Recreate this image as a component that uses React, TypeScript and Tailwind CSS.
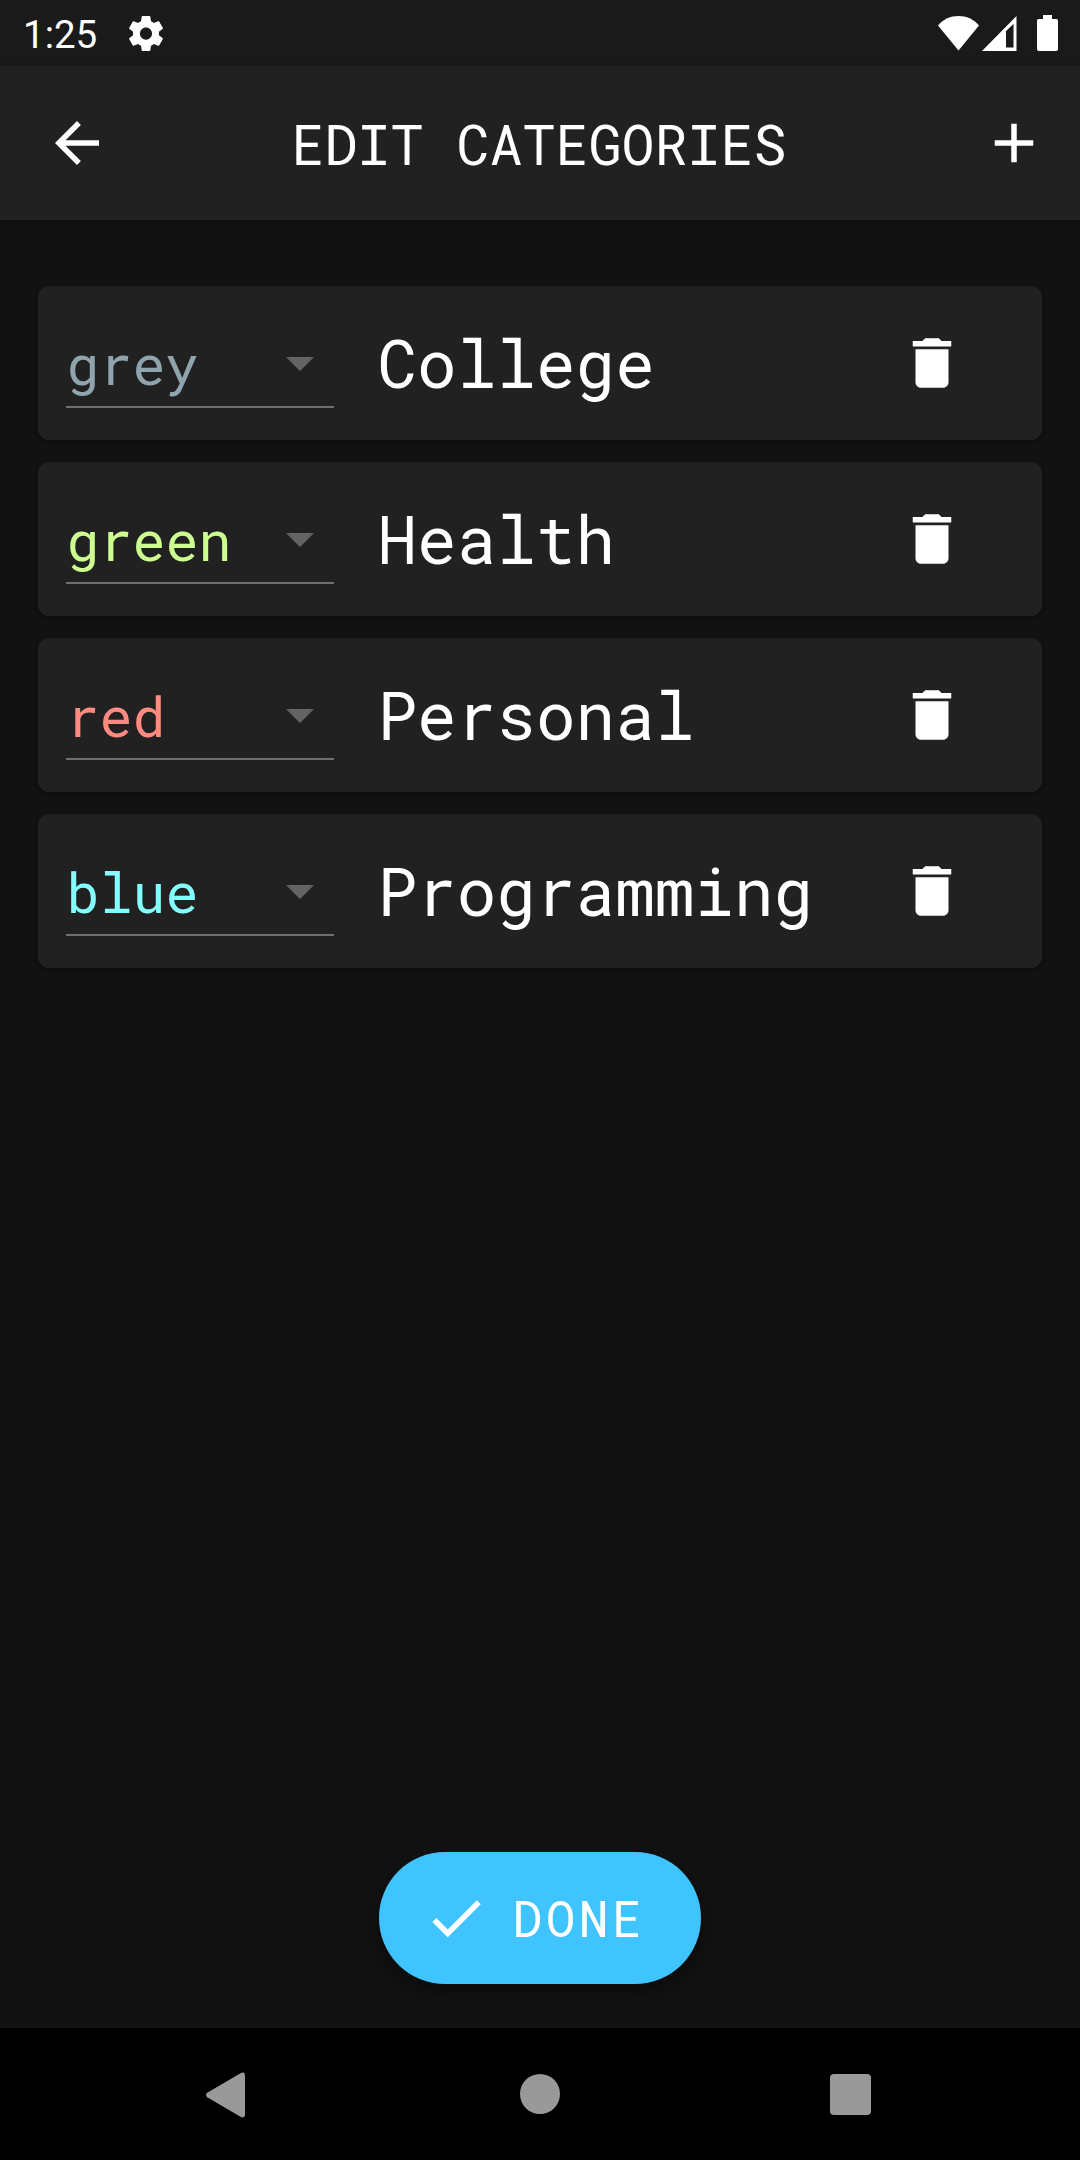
const categories = [
  { color: "grey", tint: "text-[#90a4ae]", name: "College" },
  { color: "green", tint: "text-[#ccff90]", name: "Health" },
  { color: "red", tint: "text-[#ff8a80]", name: "Personal" },
  { color: "blue", tint: "text-[#84ffff]", name: "Programming" },
];

function Icon({ d, className = "" }: { d: string; className?: string }) {
  return (
    <svg viewBox="0 0 24 24" fill="currentColor" className={`size-[66px] shrink-0 ${className}`}>
      <path d={d} />
    </svg>
  );
}

const BACK = "M20 11H7.83l5.59-5.59L12 4l-8 8 8 8 1.41-1.41L7.83 13H20v-2z";
const ADD = "M19 13h-6v6h-2v-6H5v-2h6V5h2v6h6v2z";
const DELETE = "M6 19c0 1.1.9 2 2 2h8c1.1 0 2-.9 2-2V7H6v12zM19 4h-3.5l-1-1h-5l-1 1H5v2h14V4z";
const CHECK = "M9 16.17L4.83 12l-1.42 1.41L9 19 21 7l-1.41-1.41z";
const SETTINGS =
  "M19.43 12.98c.04-.32.07-.64.07-.98s-.03-.66-.07-.98l2.11-1.65c.19-.15.24-.42.12-.64l-2-3.46c-.12-.22-.39-.3-.61-.22l-2.49 1c-.52-.4-1.08-.73-1.69-.98l-.38-2.65C14.46 2.18 14.25 2 14 2h-4c-.25 0-.46.18-.49.42l-.38 2.65c-.61.25-1.17.59-1.69.98l-2.49-1c-.23-.09-.49 0-.61.22l-2 3.46c-.13.22-.07.49.12.64l2.11 1.65c-.04.32-.07.65-.07.98s.03.66.07.98l-2.11 1.65c-.19.15-.24.42-.12.64l2 3.46c.12.22.39.3.61.22l2.49-1c.52.4 1.08.73 1.69.98l.38 2.65c.03.24.24.42.49.42h4c.25 0 .46-.18.49-.42l.38-2.65c.61-.25 1.17-.59 1.69-.98l2.49 1c.23.09.49 0 .61-.22l2-3.46c.12-.22.07-.49-.12-.64l-2.11-1.65zM12 15.5c-1.93 0-3.5-1.57-3.5-3.5s1.57-3.5 3.5-3.5 3.5 1.57 3.5 3.5-1.57 3.5-3.5 3.5z";

function StatusBar() {
  return (
    <div className="flex h-[66px] items-center justify-between bg-[#1a1a1a] pr-[22px] pl-[23px]">
      <div className="flex items-center">
        <span className="w-[106px] pt-[4px] font-['Roboto',sans-serif] text-[38.5px] leading-none">1:25</span>
        <svg
          viewBox="2.2 2 19.6 20"
          fill="currentColor"
          className="mt-[1px] h-[35px] w-[34px]"
          preserveAspectRatio="none"
        >
          <path d={SETTINGS} />
        </svg>
      </div>
      <div className="flex items-center">
        <svg viewBox="0 0 41 35" fill="currentColor" className="mr-[3px] h-[35px] w-[41px]">
          <path d="M20.5 34.5 0 9.5C5.5 3 12.5 0 20.5 0S35.500 3 41 9.500z" />
        </svg>
        <svg viewBox="0 0 35 35" fill="currentColor" className="mr-[20px] h-[35px] w-[35px]">
          <path fillRule="evenodd" d="M34.500 0V35H0zM24 15V31.500H31.500V8z" />
        </svg>
        <svg viewBox="0 0 21 36" fill="currentColor" className="h-[36px] w-[21px]">
          <path d="M6 0h9v4h4.500q1.500 0 1.500 1.500V34q0 2-2 2H2q-2 0-2-2V5.500Q0 4 1.500 4H6z" />
        </svg>
      </div>
    </div>
  );
}

function Header() {
  return (
    <header className="flex h-[154px] items-center justify-between bg-[#212121] pr-[33px] pl-[44px] shadow-[0_2px_8px_rgba(0,0,0,0.25)]">
      <Icon d={BACK} />
      <h1 className="mr-[13px] text-[55px] leading-none font-normal">EDIT CATEGORIES</h1>
      <Icon d={ADD} />
    </header>
  );
}

function CategoryRow({ color, tint, name }: (typeof categories)[number]) {
  return (
    <li className="flex h-[154px] items-center rounded-[11px] bg-[#212121] pl-[28px] shadow-[0_2px_4px_rgba(0,0,0,0.3)]">
      <div className="-mt-[2px] flex h-[92px] w-[268px] items-center justify-between border-b-2 border-[#707070] pt-[36px] pr-[20px] pb-[30px]">
        <span className={`mb-[2px] pl-[0.5px] text-[55px] leading-none ${tint}`}>{color}</span>
        <svg viewBox="0 0 28 14" className="h-[14px] w-[28px] fill-[#646464]">
          <path d="M0 0H28L14 14z" />
        </svg>
      </div>
      <span className="ml-[43.500px] flex-1 text-[66px] leading-none">{name}</span>
      <Icon d={DELETE} className="mr-[77.500px]" />
    </li>
  );
}

function NavBar() {
  return (
    <nav className="flex h-[132px] items-center justify-between bg-black pr-[209px] pl-[206px]">
      <svg viewBox="0 0 39 46" className="mt-[2px] h-[46px] w-[39px] fill-[#999]">
        <path d="M1.200 20.800 34.500 1.200Q39-1 39 4V42Q39 47 34.500 44.800L1.200 25.200Q-1.200 23 1.200 20.800z" />
      </svg>
      <div className="ml-[5px] size-10 rounded-full bg-[#999]" />
      <div className="mt-[1px] size-[41px] rounded-[4px] bg-[#999]" />
    </nav>
  );
}

export default function App() {
  return (
    <div className="flex h-[2160px] w-[1080px] flex-col bg-[#121212] font-['Roboto_Mono',monospace] text-white">
      <StatusBar />
      <Header />
      <main className="flex flex-1 flex-col items-center justify-between px-[38px] pt-[66px] pb-[44px]">
        <ul className="flex w-full flex-col gap-[22px]">
          {categories.map((category) => (
            <CategoryRow key={category.name} {...category} />
          ))}
        </ul>
        <button className="flex h-[132px] w-[322px] items-center rounded-full bg-[#40c4ff] pl-[44px] shadow-[0_8px_20px_rgba(0,0,0,0.45)]">
          <Icon d={CHECK} />
          <span className="ml-[23.500px] text-[49.5px] leading-none tracking-[3.44px]">DONE</span>
        </button>
      </main>
      <NavBar />
    </div>
  );
}
